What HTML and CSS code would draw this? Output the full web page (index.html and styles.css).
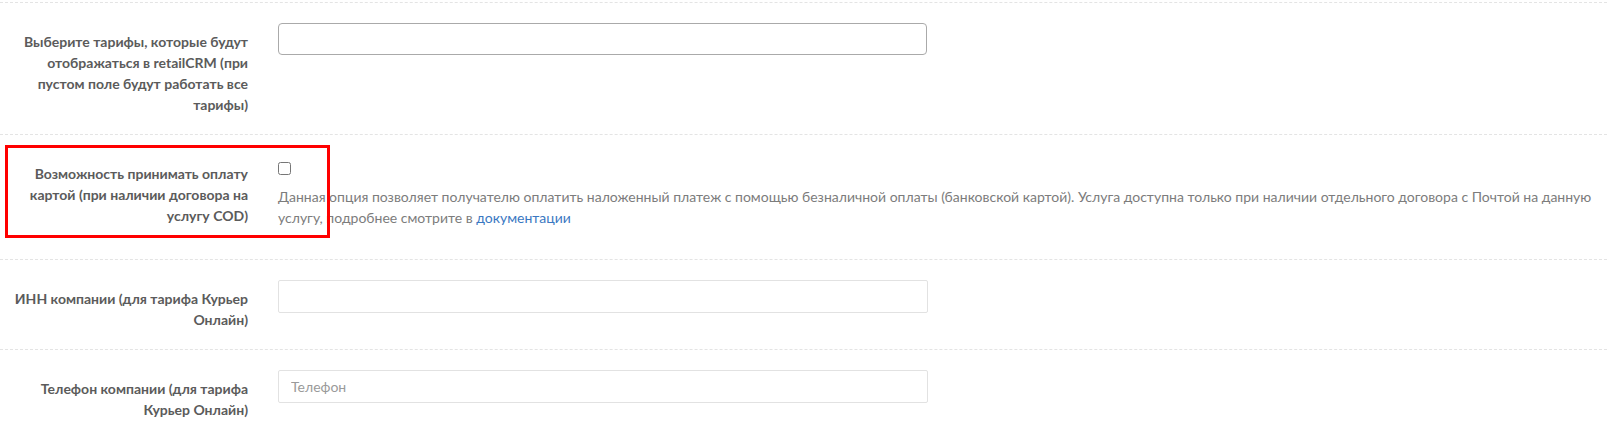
FILE: index.html
```html
<!DOCTYPE html>
<html lang="ru">
<head>
<meta charset="utf-8">
<title>Настройки</title>
<link rel="stylesheet" href="styles.css">
</head>
<body>
<div class="form">
  <div class="row">
    <label class="row__label">Выберите тарифы, которые будут отображаться в retailCRM (при пустом поле будут работать все тарифы)</label>
    <div class="row__value">
      <div class="multiselect"></div>
    </div>
  </div>
  <div class="row">
    <label class="row__label" for="cod">Возможность принимать оплату картой (при наличии договора на услугу COD)</label>
    <div class="row__value">
      <div class="check"><input type="checkbox" id="cod" class="check__box"></div>
      <p class="help">Данная опция позволяет получателю оплатить наложенный платеж с помощью безналичной оплаты (банковской картой). Услуга доступна только при наличии отдельного договора с Почтой на данную услугу, подробнее смотрите в <a class="help__link" href="#">документации</a></p>
    </div>
  </div>
  <div class="row">
    <label class="row__label">ИНН компании (для тарифа Курьер Онлайн)</label>
    <div class="row__value">
      <input class="field" type="text">
    </div>
  </div>
  <div class="row">
    <label class="row__label">Телефон компании (для тарифа Курьер Онлайн)</label>
    <div class="row__value">
      <input class="field" type="text" placeholder="Телефон">
    </div>
  </div>
  <div class="highlight"></div>
</div>
</body>
</html>
```
FILE: styles.css
```css
html, body {
  margin: 0;
  padding: 0;
  background: #fff;
}

body {
  font-family: "Lato", "Liberation Sans", sans-serif;
  font-size: 14px;
  line-height: 21px;
  color: #5b5b5b;
}

.form {
  position: relative;
  padding-top: 2px;
}

.row {
  display: flex;
  align-items: flex-start;
  padding: 20px 0 19px;
  border-top: 1px dashed #e4e4e4;
}

.row:last-of-type {
  border-bottom: 1px dashed #e4e4e4;
}

.row__label {
  flex: 0 0 263px;
  box-sizing: border-box;
  padding: 8px 15px 0 0;
  text-align: right;
  font-weight: bold;
  color: #5b5b5b;
}

.row__value {
  flex: 1 1 auto;
  min-width: 0;
  padding: 0 8px 0 15px;
}

.multiselect {
  width: 649px;
  height: 32px;
  box-sizing: border-box;
  border: 1px solid #aaa;
  border-radius: 4px;
  background: #fff;
}

.field {
  display: block;
  width: 650px;
  height: 33px;
  box-sizing: border-box;
  margin: 0;
  padding: 0 12px;
  border: 1px solid #e2e2e2;
  border-radius: 2px;
  background: #fff;
  font-family: "Lato", "Liberation Sans", sans-serif;
  font-size: 14px;
  color: #555;
  outline: none;
}

.field::placeholder {
  color: #9a9a9a;
}

.check {
  height: 13px;
  padding-top: 7px;
}

.check__box {
  display: block;
  width: 13px;
  height: 13px;
  margin: 0;
}

.help {
  margin: 11px 0 12px;
  color: #7c7c7c;
  font-size: 14px;
  line-height: 21px;
}

.help__link {
  color: #3a78c2;
  text-decoration: none;
}

.highlight {
  position: absolute;
  left: 5px;
  top: 145px;
  width: 325px;
  height: 93px;
  box-sizing: border-box;
  border: 3px solid #ff0000;
  pointer-events: none;
}
```
